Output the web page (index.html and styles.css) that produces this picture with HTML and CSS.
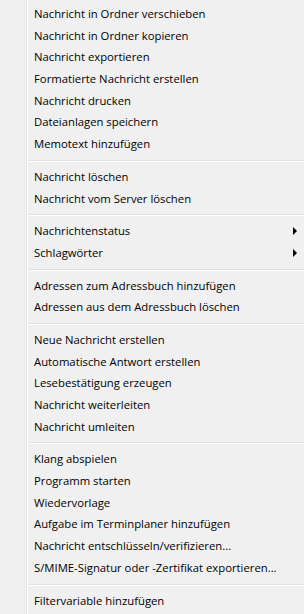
FILE: index.html
```html
<!DOCTYPE html>
<html lang="de">
<head>
    <meta charset="UTF-8">
    <title>Kontextmenü Nachricht</title>
    <link rel="stylesheet" href="styles.css">
</head>
<body>
    <ul class="menu">
        <li class="item">Nachricht in Ordner verschieben</li>
        <li class="item">Nachricht in Ordner kopieren</li>
        <li class="item">Nachricht exportieren</li>
        <li class="item">Formatierte Nachricht erstellen</li>
        <li class="item">Nachricht drucken</li>
        <li class="item">Dateianlagen speichern</li>
        <li class="item">Memotext hinzufügen</li>
        <li class="sep"></li>
        <li class="item">Nachricht löschen</li>
        <li class="item">Nachricht vom Server löschen</li>
        <li class="sep"></li>
        <li class="item sub">Nachrichtenstatus <span class="arrow"></span></li>
        <li class="item sub">Schlagwörter <span class="arrow"></span></li>
        <li class="sep"></li>
        <li class="item">Adressen zum Adressbuch hinzufügen</li>
        <li class="item">Adressen aus dem Adressbuch löschen</li>
        <li class="sep"></li>
        <li class="item">Neue Nachricht erstellen</li>
        <li class="item">Automatische Antwort erstellen</li>
        <li class="item">Lesebestätigung erzeugen</li>
        <li class="item">Nachricht weiterleiten</li>
        <li class="item">Nachricht umleiten</li>
        <li class="sep"></li>
        <li class="item">Klang abspielen</li>
        <li class="item">Programm starten</li>
        <li class="item">Wiedervorlage</li>
        <li class="item">Aufgabe im Terminplaner hinzufügen</li>
        <li class="item">Nachricht entschlüsseln/verifizieren...</li>
        <li class="item">S/MIME-Signatur oder -Zertifikat exportieren...</li>
        <li class="sep"></li>
        <li class="item">Filtervariable hinzufügen</li>
    </ul>
</body>
</html>
```

FILE: styles.css
```css
body {
    margin: 0;
    background-color: #f0f0f0;
    font-family: "Open Sans", "Noto Sans", sans-serif;
    font-size: 11.3px;
    color: #000;
}

/* linke Spalte mit der doppelten Trennlinie */
.menu {
    list-style: none;
    margin: 0;
    padding: 3px 0 2px 0;
    background: linear-gradient(to right, #f0f0f0 26px, #e2e3e3 26px, #e2e3e3 27px, #fff 27px, #fff 28px, #f0f0f0 28px);
    min-height: 609px;
}

.item {
    height: 21.7px;
    line-height: 21.7px;
    padding-left: 34px;
    white-space: nowrap;
}

.sub {
    display: flex;
    justify-content: space-between;
    align-items: center;
}

.arrow {
    width: 0;
    height: 0;
    border-left: 4px solid #000;
    border-top: 4px solid transparent;
    border-bottom: 4px solid transparent;
    margin-right: 7px;
}

.sep {
    height: 11px;
    margin-left: 29px;
    background: linear-gradient(to bottom, transparent 5px, #e0e0e0 5px, #e0e0e0 6px, #fff 6px, #fff 7px, transparent 7px);
}
```
